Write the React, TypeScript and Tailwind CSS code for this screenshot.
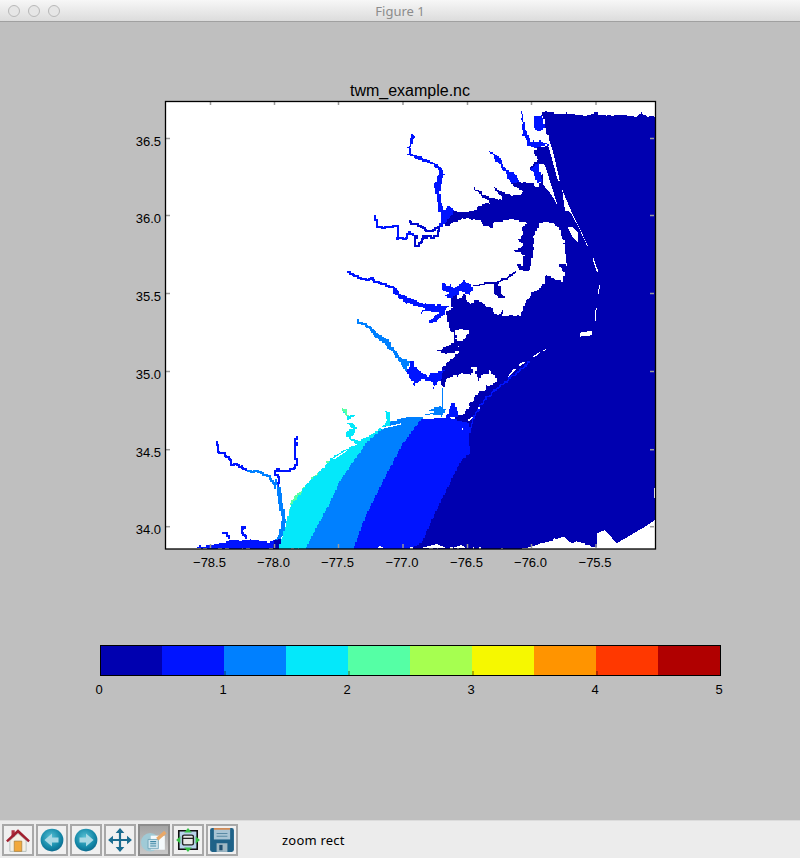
const DARK = "#0000b0";
const BRIGHT = "#0014ff";
const LIGHT = "#0080ff";
const CYAN = "#04e8fa";
const GREEN = "#55ffa5";
const COLORS = [DARK, BRIGHT, LIGHT, CYAN, GREEN, "#a6ff50", "#f6f800", "#ff9400", "#ff3800", "#b00000"];

const XT: [number, string][] = [[210.5, "−78.5"], [274.5, "−78.0"], [338.5, "−77.5"], [403, "−77.0"], [467.5, "−76.5"], [531.5, "−76.0"], [596, "−75.5"]];
const YT: [number, string][] = [[138.5, "36.5"], [215.5, "36.0"], [293.5, "35.5"], [371.5, "35.0"], [449.7, "34.5"], [526.7, "34.0"]];

// Turns a traced outline into the stair-stepped, slightly irregular edge of gridded data.
function jag(p: string, amp: number, closed: boolean) {
  const pts = p.trim().split(/\s+/).map((s) => s.split(",").map(Number));
  const G = 4;
  const snap = (v: number) => Math.round(v / G) * G;
  const out: string[] = [];
  let last: [number, number] | null = null;
  const n = closed ? pts.length : pts.length - 1;
  for (let i = 0; i < n; i++) {
    const [x1, y1] = pts[i];
    const [x2, y2] = pts[(i + 1) % pts.length];
    const steps = Math.max(1, Math.ceil(Math.hypot(x2 - x1, y2 - y1) / 4));
    for (let s = 0; s < steps; s++) {
      const t = s / steps;
      const x = x1 + (x2 - x1) * t;
      const y = y1 + (y2 - y1) * t;
      const nx = amp * (Math.sin(x * 0.21 + y * 0.07) + Math.sin(x * 0.06 - y * 0.27 + 2)) * 0.5;
      const ny = amp * (Math.sin(x * 0.09 - y * 0.19 + 1) + Math.sin(x * 0.29 + y * 0.05 + 4)) * 0.5;
      const sx = snap(x + nx);
      const sy = snap(y + ny);
      if (last) out.push(`${sx},${last[1]}`);
      out.push(`${sx},${sy}`);
      last = [sx, sy];
    }
  }
  return out.join(" ");
}

function F({ c, p, a = 5 }: { c: string; p: string; a?: number }) {
  return <polygon fill={c} points={jag(p, a, true)} />;
}
function B({ c, p }: { c: string; p: string }) {
  return <polygon fill={c} points={jag(p, 0, true)} />;
}
function W({ p }: { p: string }) {
  return <polygon fill="#fff" points={p} />;
}
function L({ c, p, w = 5.5 }: { c: string; p: string; w?: number }) {
  return <polyline fill="none" stroke={c} strokeWidth={w} points={jag(p, 3, false)} />;
}

function MapPlot() {
  return (
    <svg width={535} height={485} viewBox="130 100 535 485" className="block">
      <rect x={165} y={101} width={490} height={448} fill="#fff" />
      <g shapeRendering="crispEdges">
        {/* northern half */}
        <g transform="translate(330 95) scale(0.33333)">
          <F a={3} c={DARK} p="637,52 700,55 770,62 797,52 810,60 900,62 925,65 935,52 945,66 975,66 975,750 372,750 372,720 355,690 350,650 365,640 362,610 372,600 385,610 400,600 420,625 445,615 460,630 480,640 500,660 520,645 520,665 570,660 585,625 610,590 640,570 650,540 695,560 705,540 690,510 710,510 705,455 690,400 672,385 650,380 630,385 625,400 610,420 610,475 600,525 585,530 555,510 580,510 582,480 555,465 580,450 565,430 580,420 578,395 595,385 545,372 490,385 490,400 460,390 450,375 400,370 340,397 360,350 430,350 440,335 480,322 425,275 470,305 525,320 495,280 545,305 580,290 540,265 570,260 600,265 625,280 640,225 625,200 610,230 600,215 625,195 610,165 620,155 660,155" />
          <rect x={800} y={66} width={175} height={684} fill={DARK} />
          <W p="652,120 668,165 690,260 684,258 660,170 648,130" />
          <W p="632,205 645,210 662,265 683,332 665,300 640,270 638,240" />
          <W p="697,285 720,340 775,455 770,450 745,395 720,350 705,348 700,310" />
          <W p="712,395 725,395 745,415 745,445 730,430" />
          <W p="790,488 805,530 801,532 790,500" />
          <W p="630,385 650,382 650,390 635,395" />
          <W p="808,568 810,575 806,596 803,596" />
          <W p="797,640 800,640 797,678 794,678" />
          <F a={3} c={BRIGHT} p="248,113 254,125 245,150 242,175 275,187 315,205 343,228 335,260 328,290 335,330 340,345 355,330 372,345 340,397 325,395 332,365 322,320 312,265 330,225 305,205 270,195 235,175 238,145 245,125" />
          <L c={BRIGHT} p="136,362 142,395 170,398 200,392 207,410 200,430 225,428 240,412 255,420" />
          <L c="#0008d0" p="255,420 257,450 268,452 280,425 320,427 325,400 300,408 270,390 240,385 238,370" />
          <L c={BRIGHT} p="55,533 70,545 105,555 125,550 150,565 185,575" />
          <F a={3} c={BRIGHT} p="185,572 225,603 280,625 355,635 340,665 300,688 295,680 325,655 280,648 270,658 285,640 230,625 190,595" />
          <F c={BRIGHT} p="336,570 355,568 372,578 400,558 430,575 425,598 400,590 370,605 340,605 350,590" />
          <L c={DARK} p="430,572 495,562 530,550 560,525" w={3.5} />
          <F a={3} c={DARK} p="495,565 510,570 515,590 520,605 505,608 492,590" />
          <F a={3} c={BRIGHT} p="478,170 510,190 525,222 555,240 570,260 545,265 525,232 505,200" />
          <F a={3} c={BRIGHT} p="605,220 625,205 635,260 620,265" />
          <F a={3} c={BRIGHT} p="575,50 585,95 600,140 635,140 655,150 620,158 595,150 580,120 575,80" />
          <F a={2} c={BRIGHT} p="612,65 635,60 645,100 625,112 610,90" />
          <L c={LIGHT} p="80,680 110,695 150,725 185,750" />
        </g>
        {/* south-west */}
        <g transform="translate(130 400) scale(0.33333)">
          <F a={3} c={GREEN} p="475,355 485,300 520,260 600,180 530,255 490,320 480,350" />
          <F a={2} c={CYAN} p="445,447 465,385 482,320 530,250 600,183 640,155 710,125 750,85 780,80 780,447" />
          <W p="610,175 640,158 640,162 612,178" />
          <B c={LIGHT} p="525,447 600,305 630,240 710,125 780,90 780,447" />
          <B c={BRIGHT} p="670,447 705,350 770,220 780,205 780,447" />
          <F a={3} c={CYAN} p="636,25 650,30 655,45 680,42 665,55 652,65 680,80 680,100 660,110 690,125 680,135 665,120 648,105 650,95 670,88 655,70 650,50" />
          <F a={1} c={GREEN} p="636,25 650,30 655,48 650,50" />
          <F a={2} c={CYAN} p="765,30 780,40 775,75 750,85 770,65" />
          <L c={BRIGHT} p="258,125 265,155 295,170 305,195 335,200 350,215" />
          <L c={LIGHT} p="350,215 385,213 420,230 440,270" />
          <L c={BRIGHT} p="500,110 493,160 503,190 490,210 460,212 440,207 435,222 450,235 445,265" />
          <F a={2} c={LIGHT} p="435,235 450,265 465,350 470,360 460,405 450,420 435,420 450,390 455,345 445,310" />
          <F a={3} c={BRIGHT} p="195,447 200,442 260,432 295,422 360,420 410,425 450,420 445,447" />
          <L c={BRIGHT} p="278,400 290,398 295,422" />
          <L c={BRIGHT} p="328,380 345,380 335,395 350,420" />
          <F a={2} c={DARK} p="430,422 455,415 447,447 428,447" />
        </g>
        {/* southern half */}
        <g transform="translate(330 330) scale(0.33333)">
          <F a={2} c={DARK} p="372,0 800,0 800,655 700,620 605,650 585,655 250,655 255,640 310,520 360,420 380,385 400,365 400,320 340,175 330,140 335,115 392,60" />
          <polygon fill={DARK} points="800,0 975,0 975,570 945,590 860,640 825,600 725,640 695,615 605,650 585,655 500,655 500,0" />
          <F a={2} c={DARK} p="322,62 370,38 392,62 345,72" />
          <W p="750,8 785,2 785,16 750,20" />
          <F a={3} c="#fff" p="378,0 415,0 418,10 400,32 380,36" />
          <F a={5} c="#fff" p="345,150 360,140 380,135 390,130 405,130 425,145 430,100 437,120 440,150 470,130 475,120 495,135 497,155 450,185 440,200 410,240 390,260 375,230 365,220 360,260 345,235 338,175" />
          <F a={2} c={LIGHT} p="120,2 135,8 175,32 195,62 215,88 240,92 228,128 210,95 190,70 165,42 130,14" />
          <F a={4} c={BRIGHT} p="228,125 240,92 265,120 290,135 325,125 345,115 335,145 310,175 305,155 270,150 255,165 250,175 250,150" />
          <polyline fill="none" stroke={LIGHT} strokeWidth={3.5} points="338,175 338,235" />
          <B c={CYAN} p="0,385 40,360 75,345 90,330 120,315 180,275 240,262 125,345 45,460 15,520 0,530" />
          <B c={LIGHT} p="0,515 30,450 110,335 180,275 240,258 280,258 280,270 230,345 185,430 120,560 85,655 0,655" />
          <B c={BRIGHT} p="70,655 105,560 170,430 215,345 270,270 350,262 415,280 415,320 420,370 395,392 380,420 330,520 275,640 240,655" />
          <F a={3} c={BRIGHT} p="365,220 375,225 385,262 350,262" />
          <F a={3} c={LIGHT} p="295,240 320,230 345,235 340,255 270,258 320,245" />
          <F a={3} c={CYAN} p="165,240 180,260 180,285 155,297 175,275" />
          <L c={BRIGHT} p="600,97 510,170 470,205 430,260 415,320" w={4} />
          <W p="650,58 640,64 638,62 648,56" />
          <W p="632,68 612,82 608,80 628,66" />
          <W p="587,95 572,108 565,106 578,95" />
          <W p="558,118 535,142 533,140 550,118" />
          <W p="972,475 975,475 975,505 972,505" />
          <W p="140,655 150,648 165,655" />
          <W p="270,655 320,642 352,655" />
          <W p="365,655 395,645 410,655" />
          <W p="150,293 214,280 214,284 155,297" />
          <W p="10,385 50,360 50,364 12,389" />
          <W p="396,295 400,295 400,300 396,300" />
          <W p="445,232 450,232 450,237 445,237" />
          <W p="412,270 430,258 430,263 416,274" />
        </g>
      </g>
      {XT.map(([x]) => (
        <g key={x} stroke="#9a9a9a" strokeWidth={1.5}>
          <line x1={x} x2={x} y1={102} y2={105} />
          <line x1={x} x2={x} y1={544} y2={548} />
        </g>
      ))}
      {YT.map(([y]) => (
        <g key={y} stroke="#9a9a9a" strokeWidth={1.5}>
          <line x1={166} x2={170} y1={y} y2={y} />
          <line x1={650} x2={654} y1={y} y2={y} />
        </g>
      ))}
      <rect x={165.5} y={101.5} width={490} height={447.5} fill="none" stroke="#000" strokeWidth={1.3} />
      <g fill="#000" fontSize={13} fontFamily="'Liberation Sans', sans-serif">
        {XT.map(([x, t]) => (
          <text key={t} x={x - 1} y={567} textAnchor="middle">{t}</text>
        ))}
        {YT.map(([y, t]) => (
          <text key={t} x={161} y={y + 7} textAnchor="end">{t}</text>
        ))}
      </g>
    </svg>
  );
}

function ToolButton({ active, children }: { active?: boolean; children: React.ReactNode }) {
  return (
    <div className={active ? "flex h-[32px] w-[32px] items-center justify-center border-2 border-[#8c8c8c] bg-gradient-to-b from-[#a4a4a4] to-[#c8c8c8]" : "flex h-[32px] w-[32px] items-center justify-center border-2 border-[#a8a8a8] bg-[#f0f0f0]"}>
      <svg width={26} height={26} viewBox="0 0 24 24">{children}</svg>
    </div>
  );
}

function Circle({ dir }: { dir: "l" | "r" }) {
  const id = dir === "l" ? "cl" : "cr";
  return (
    <>
      <defs>
        <radialGradient id={id} cx="0.45" cy="0.38" r="0.68">
          <stop offset="0" stopColor="#58c0d4" />
          <stop offset="0.65" stopColor="#1488a8" />
          <stop offset="1" stopColor="#0c6488" />
        </radialGradient>
      </defs>
      <circle cx={12} cy={12} r={10.5} fill={`url(#${id})`} />
      <path d={dir === "l" ? "M5 12 12 6v3.700h6v4.600h-6V18z" : "M19 12 12 6v3.700H6v4.600h6V18z"} fill="#a8d8e4" />
    </>
  );
}

export default function App() {
  return (
    <div className="flex h-[858px] w-[800px] flex-col bg-[#ececec] font-['Liberation_Sans',sans-serif]">
      <div className="relative flex h-[22px] items-center border-b border-[#a0a0a0] bg-gradient-to-b from-[#f7f7f7] to-[#dcdcdc]">
        <div className="flex gap-2 pl-2">
          <span className="h-3 w-3 rounded-full border border-[#b8b8b8] bg-[#e6e6e6]" />
          <span className="h-3 w-3 rounded-full border border-[#b8b8b8] bg-[#e6e6e6]" />
          <span className="h-3 w-3 rounded-full border border-[#b8b8b8] bg-[#e6e6e6]" />
        </div>
        <span className="absolute left-0 right-0 top-[2px] text-center font-['Noto_Sans',sans-serif] text-[13px] text-[#8c8c8c]">Figure 1</span>
      </div>
      <div className="h-[798px] bg-[#bfbfbf] pt-[60px]">
        <div className="ml-[165px] w-[490px] text-center text-[16px] leading-[18px] text-black">twm_example.nc</div>
        <div className="ml-[130px]">
          <MapPlot />
        </div>
        <div className="ml-[100px] mt-[60px] flex h-[31px] w-[621px] border border-black">
          {COLORS.map((c, i) => (
            <div key={c} className={i === 0 ? "relative w-[61px]" : i === 9 ? "relative flex-1" : "relative w-[62px]"} style={{ background: c }}>
              {i % 2 === 0 && i > 0 && <span className="absolute bottom-0 left-0 h-1 w-[2px] bg-black/30" />}
            </div>
          ))}
        </div>
        <div className="ml-[37px] mt-[6px] flex text-[13px] leading-[15px] text-black">
          {["0", "1", "2", "3", "4", "5"].map((t) => (
            <span key={t} className="w-[124px] text-center">{t}</span>
          ))}
        </div>
      </div>
      <div className="flex flex-1 items-center gap-[2px] border-t border-[#dcdcdc] pl-[2px]">
        <ToolButton>
          <path d="M6 3h3v6H6z" fill="#b03040" />
          <path d="M4.500 12.500v10h15v-10L12 6z" fill="#f4f0e6" stroke="#9aa" strokeWidth={0.6} />
          <path d="M8.500 22.500v-9.500h7v9.500z" fill="#f2a93c" stroke="#a07838" strokeWidth={0.6} />
          <path d="M12 2 1 12.500l1.500 1.500L12 5.500l9.500 8.500 1.500-1.500z" fill="#a0202f" />
        </ToolButton>
        <ToolButton><Circle dir="l" /></ToolButton>
        <ToolButton><Circle dir="r" /></ToolButton>
        <ToolButton>
          <path d="M12 1 16 5.500H13V11H18.500V8L23 12l-4.500 4v-3H13v5.500H16L12 23l-4-4.500h3V13H5.500V16L1 12l4.500-4v3H11V5.500H8z" fill="#1a6c90" />
        </ToolButton>
        <ToolButton active>
          <circle cx={8.500} cy={14} r={8.500} fill="#a0cad6" />
          <path d="M9 8h13v13H9z" fill="#f4fafc" />
          <path d="M6.500 11.500h9.500v8.500H6.500z" fill="#cfe4ec" stroke="#6ea4b8" strokeWidth={0.8} />
          <path d="M8.500 13.500h5.500M8.500 15.500h5.500M8.500 17.500h5.500" stroke="#3f88a6" strokeWidth={1} />
          <path d="m14 10 7.500-6.500 2 2.500-7.500 6.500z" fill="#e8a868" />
        </ToolButton>
        <ToolButton>
          <path d="M3.500 3.500h17v17h-17z" fill="#b8d4ec" stroke="#111" strokeWidth={1.500} />
          <rect x={7} y={7.500} width={10} height={9} rx={1.500} fill="#e8e8e8" stroke="#222" strokeWidth={1.300} />
          <path d="M7 10.500h10" stroke="#222" strokeWidth={1.200} />
          <path d="M12 1 15.500 5h-7zM12 23l3.500-4h-7zM1 12l4-3.500v7zM23 12l-4-3.500v7z" fill="#38c048" />
        </ToolButton>
        <ToolButton>
          <path d="M1 3a2 2 0 0 1 2-2h18a2 2 0 0 1 2 2v18a2 2 0 0 1-2 2H3a2 2 0 0 1-2-2z" fill="#1f6288" />
          <path d="M4.500 1h15v10.500h-15z" fill="#a8c4d4" />
          <path d="M4.500 1h15v1.500h-15z" fill="#d8864a" />
          <path d="M7 6h10M7 8.500h10" stroke="#5a8aa4" strokeWidth={1} />
          <path d="M7 15h10v8H7z" fill="#a0b8c4" />
          <path d="M9.500 16.500h3v5h-3z" fill="#1f4f70" />
        </ToolButton>
        <span className="ml-[42px] pt-[2px] font-['Noto_Sans',sans-serif] text-[13px] tracking-[0.2px] text-black">zoom rect</span>
      </div>
    </div>
  );
}
